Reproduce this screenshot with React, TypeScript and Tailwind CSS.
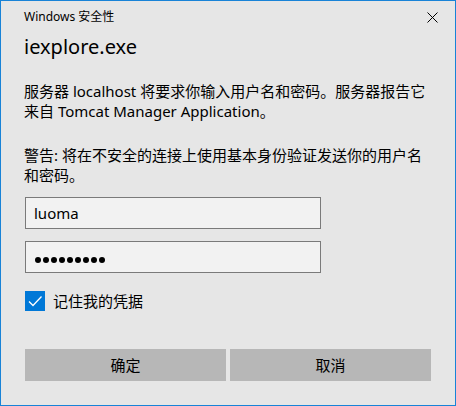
import React from "react";

const font = { fontFamily: '"Noto Sans", "Noto Sans CJK SC", sans-serif' };

export default function App() {
  return (
    <div
      className="w-[456px] h-[406px] border border-[#1883D7] bg-[#E6E6E6] text-black flex flex-col"
      style={font}
    >
      <div className="h-[32px] flex items-center justify-between pl-[23px] pr-[16px] shrink-0">
        <span className="text-[12px] leading-[16px] font-['Noto_Sans','Noto_Sans_CJK_SC',sans-serif]">Windows 安全性</span>
        <svg width="11" height="11" viewBox="0 0 11 11" className="mr-[1px]">
          <path d="M0.5 0.5 L10.5 10.5 M10.5 0.5 L0.5 10.5" stroke="#000" strokeWidth="1" />
        </svg>
      </div>
      <div className="px-[23px] flex flex-col">
        <div className="text-[20px] leading-[28px] mt-[0px]">iexplore.exe</div>
        <div className="mt-[20px] text-[15px] leading-[20px] whitespace-nowrap">
          服务器 localhost 将要求你输入用户名和密码。服务器报告它
          <br />
          来自 Tomcat Manager Application。
        </div>
        <div className="mt-[24px] text-[15px] leading-[20px] whitespace-nowrap">
          警告: 将在不安全的连接上使用基本身份验证发送你的用户名
          <br />
          和密码。
        </div>
        <div className="mt-[12px] ml-[1px] w-[296px] h-[32px] border border-[#7A7A7A] bg-[#F2F2F2] flex items-center pl-[8px] text-[15px]">
          luoma
        </div>
        <div className="mt-[12px] ml-[1px] w-[296px] h-[32px] border border-[#7A7A7A] bg-[#F2F2F2] flex items-center pl-[9px]">
          <div className="flex gap-[2px] mt-[5px]">
            {Array.from({ length: 9 }).map((_, i) => (
              <span key={i} className="w-[6px] h-[6px] rounded-full bg-black" />
            ))}
          </div>
        </div>
        <div className="mt-[18px] ml-[1px] flex items-center gap-[8px]">
          <div className="w-[20px] h-[20px] bg-[#0078D7] flex items-center justify-center">
            <svg width="16" height="16" viewBox="0 0 16 16">
              <path d="M2 8.5 L6 12.5 L14.5 3.5" stroke="#fff" strokeWidth="1.3" fill="none" />
            </svg>
          </div>
          <span className="text-[15px] leading-[20px]">记住我的凭据</span>
        </div>
        <div className="mt-[38px] ml-[1px] flex gap-[4px]">
          <button className="w-[201px] h-[32px] bg-[#B7B7B7] text-[15px] flex items-center justify-center">确定</button>
          <button className="w-[201px] h-[32px] bg-[#B7B7B7] text-[15px] flex items-center justify-center">取消</button>
        </div>
      </div>
    </div>
  );
}
